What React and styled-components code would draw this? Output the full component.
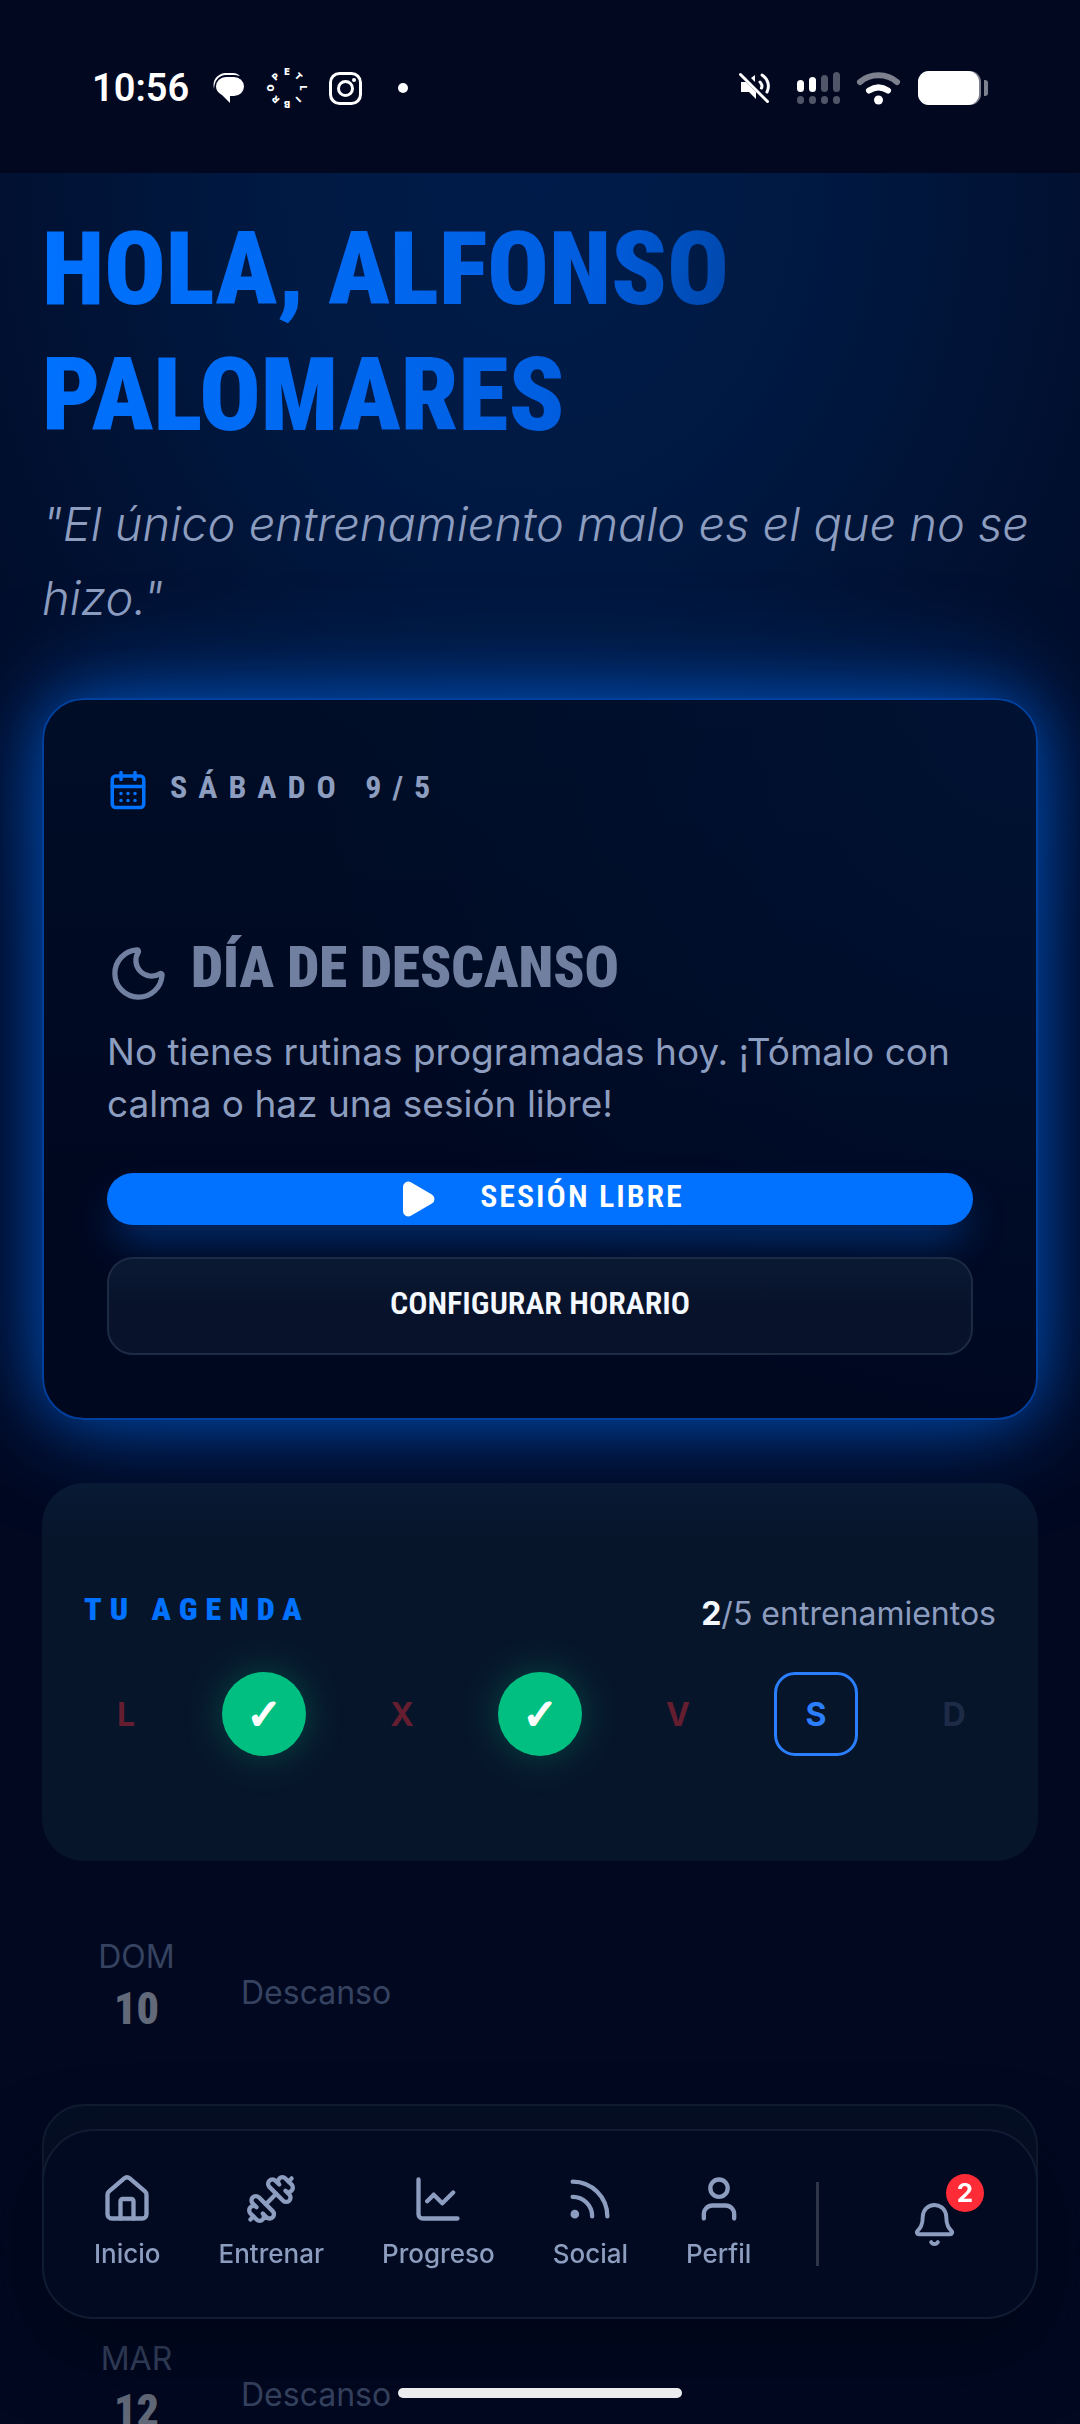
import * as React from 'react'
import styled, { createGlobalStyle, css } from 'styled-components'
import {
    Bell,
    CalendarDays,
    ChartLine,
    Dumbbell,
    House,
    Moon,
    Play,
    Rss,
    User
} from 'lucide-react'

const colors = {
    night: '#010820',
    blue: '#0072ff',
    day: '#2b7fff',
    green: '#00bf80',
    red: '#ff2b36',
    muted: '#8d9dbf',
    white: '#f4f8ff',
    line: '#101c33'
}

const heading = css`
    font-family: 'Roboto Condensed', 'Open Sans Condensed', Roboto, sans-serif;
    text-transform: uppercase;
`

const GlobalStyle = createGlobalStyle`
    * {
        box-sizing: border-box;
    }

    body {
        margin: 0;
        background: ${colors.night};
        color: ${colors.muted};
        font-family: Inter, Roboto, sans-serif;
    }

    h1, h2, h3, p, ul {
        margin: 0;
        padding: 0;
    }

    button {
        font: inherit;
        color: inherit;
        cursor: pointer;
    }
`

/* ---------- status bar ---------- */

const StatusBar = styled.header`
    display: flex;
    align-items: center;
    justify-content: space-between;
    flex: none;
    height: 173px;
    padding: 3px 92px 0;
    background: ${colors.night};
    color: white;

    svg {
        display: block;
        flex: none;
        overflow: visible;
    }
`

const StatusGroup = styled.div`
    display: flex;
    align-items: center;
    gap: ${p => p.$gap}px;
`

const Clock = styled.time`
    font-family: Roboto, sans-serif;
    font-size: 38px;
    line-height: 42px;
    font-weight: 600;
    padding-right: 2px;
`

const ChatIcon = () => (
    <svg width="32" height="32" viewBox="0 0 32 32" fill="white">
        <path d="M1 17C-1 8 4 2 12 1h8c3 0 5 1 7 3C25 3.500 22 3 20 3h-8C5 4 1.500 9 1 17z" />
        <path d="M13 5h8a10 9.500 0 0 1 0 19h-4v7l-8-8C5 21 3 18 3 14.500A10 9.500 0 0 1 13 5z" />
    </svg>
)

const RingIcon = () => (
    <svg width="40" height="40" viewBox="-20 -20 40 40" fill="white">
        {'ETLIBROP'.split('').map((letter, i) => (
            <text
                key={letter}
                y="-13"
                fontSize="9"
                fontWeight="900"
                fontFamily="Inter, sans-serif"
                textAnchor="middle"
                transform={`rotate(${i * 45})`}
            >
                {letter}
            </text>
        ))}
    </svg>
)

const CameraIcon = () => (
    <svg width="33" height="33" viewBox="0 0 33 33" fill="none" stroke="white">
        <rect x="1.500" y="1.500" width="30" height="30" rx="9" strokeWidth="3" />
        <circle cx="16.500" cy="16.500" r="7" strokeWidth="3" />
        <circle cx="25" cy="8" r="2" fill="white" stroke="none" />
    </svg>
)

const MuteIcon = () => (
    <svg width="40" height="32" viewBox="0 0 40 32" fill="white">
        <path d="M2 10h5l10 10v7l-7-7H2z" />
        <path d="M12 6l4-3v7z" />
        <g fill="none" stroke="white" strokeLinecap="round">
            <path d="M1.500 2.500l27 27" strokeWidth="3" />
            <path d="M21 10q3 3 1.500 6" strokeWidth="3" />
            <path d="M23 3c6 4 8 11 5 17" strokeWidth="3" />
        </g>
    </svg>
)

const SignalIcon = () => (
    <svg width="42" height="32" viewBox="0 0 42 32">
        {[8, 5, 3, 0].map((top, i) => (
            <g key={top} fill={i < 2 ? 'white' : '#505667'}>
                <rect x={i * 12} y={top} width="7" height={20 - top} rx="3.500" />
                <rect
                    x={i * 12}
                    y="24"
                    width="7"
                    height="8"
                    rx="3.500"
                    fill="#505667"
                />
            </g>
        ))}
    </svg>
)

const WifiIcon = () => (
    <svg width="43" height="33" viewBox="0 0 43 33" fill="none">
        <g strokeWidth="6" strokeLinecap="round">
            <path d="M3 10c10-9 27-9 37 0" stroke="#7d818e" />
            <path d="M12 18.500c6-4 13-4 19 0" stroke="white" />
        </g>
        <circle cx="21.500" cy="28" r="4.500" fill="white" />
    </svg>
)

const BatteryIcon = () => (
    <svg width="70" height="34" viewBox="0 0 70 34">
        <rect width="63" height="34" rx="11" fill="#7d818e" />
        <rect width="61" height="34" rx="11" fill="white" />
        <path d="M66 9h1a3 3 0 0 1 3 3v10a3 3 0 0 1-3 3h-1z" fill="#7d818e" />
    </svg>
)

const DotIcon = () => (
    <svg width="24" height="10" viewBox="0 0 24 10">
        <circle cx="19" cy="5" r="5" fill="white" />
    </svg>
)

/* ---------- page ---------- */

const Screen = styled.div`
    display: flex;
    flex-direction: column;
    height: 100vh;
    overflow: hidden;
    background: radial-gradient(
            ellipse 75% 42% at 50% 7%,
            #001b49 0%,
            #001a44 30%,
            #00123400 100%
        ),
        ${colors.night};
`

const Main = styled.main`
    display: flex;
    flex-direction: column;
    flex: 1;
    min-height: 0;
    padding: 33px 42px 0;

    > * {
        flex: none;
    }
`

const Greeting = styled.h1`
    ${heading}
    max-width: 800px;
    font-size: 102px;
    line-height: 126px;
    font-weight: 900;
    color: transparent;
    background: linear-gradient(
        100deg,
        #0072ff 0%,
        #0068f0 40%,
        #005cdc 68%,
        #0046a8 84%,
        #003888 100%
    );
    background-clip: text;
`

const Quote = styled.p`
    margin: 29px 0 63px;
    font-size: 47px;
    line-height: 74px;
    font-weight: 300;
    font-style: italic;
`

const Card = styled.section`
    margin-bottom: ${p => (p.$glow ? 63 : 42)}px;
    border-radius: 42px;
    padding: 105px 42px;
    background: linear-gradient(#081a35, #07152b 14%);

    ${p =>
        p.$glow &&
        css`
            padding: 63px;
            border: 2px solid #00409f;
            background: radial-gradient(
                    circle at 100% 0%,
                    #001233,
                    #00123300 60%
                ),
                linear-gradient(#000d26, #000820 70%);
            box-shadow: 0 0 52px rgba(0, 114, 255, 0.3),
                0 0 105px rgba(0, 114, 255, 0.6);
        `}
`

const DateRow = styled.div`
    display: flex;
    align-items: center;
    gap: 21px;
    height: 53px;
    margin-bottom: 126px;
    color: ${colors.blue};
`

const DateText = styled.p`
    ${heading}
    padding-bottom: 6px;
    font-size: 32px;
    line-height: 42px;
    font-weight: 700;
    letter-spacing: 11px;
    color: ${colors.muted};
`

const RestRow = styled.div`
    display: flex;
    align-items: center;
    gap: 21px;
    height: 63px;
    margin-bottom: 21px;
    color: #7180a0;
`

const RestTitle = styled.h2`
    ${heading}
    padding-bottom: 12px;
    font-size: 57px;
    line-height: 63px;
    font-weight: 900;
`

const Text = styled.p`
    margin-bottom: 43px;
    font-size: 37px;
    line-height: 52px;
`

const Button = styled.button`
    ${heading}
    display: flex;
    align-items: center;
    justify-content: center;
    gap: 42px;
    width: 100%;
    height: ${p => (p.$primary ? 52 : 98)}px;
    margin-top: ${p => (p.$primary ? 0 : 32)}px;
    padding: 0 0 6px;
    border: ${p => (p.$primary ? 0 : '2px solid #1d2a44')};
    border-radius: 26px;
    background: ${p =>
        p.$primary ? colors.blue : 'linear-gradient(#0a1932, #08132b 50%)'};
    box-shadow: ${p =>
        p.$primary ? '0 22px 40px -8px rgba(0, 114, 255, 0.4)' : 'none'};
    color: ${p => (p.$primary ? 'white' : colors.white)};
    font-size: 32px;
    line-height: 42px;
    font-weight: 600;
    letter-spacing: ${p => (p.$primary ? 2 : 0)}px;

    svg {
        position: relative;
        top: 3px;
    }
`

const AgendaHeader = styled.div`
    display: flex;
    align-items: flex-end;
    justify-content: space-between;
    margin-bottom: 42px;
`

const AgendaTitle = styled.h3`
    ${heading}
    font-size: 32px;
    line-height: 42px;
    font-weight: 900;
    letter-spacing: 8px;
    color: ${colors.blue};
`

const Count = styled.p`
    font-size: 32px;
    line-height: 32px;

    strong {
        font-weight: 700;
        color: ${colors.white};
    }
`

const Week = styled.ul`
    display: flex;
    justify-content: space-between;
    list-style: none;
`

const dayStyles = {
    missed: css`
        color: #651e30;
    `,
    done: css`
        border-radius: 50%;
        background: ${colors.green};
        box-shadow: 0 0 39px rgba(0, 191, 128, 0.3);
        color: white;
        font-family: 'DejaVu Sans', sans-serif;
        font-size: 42px;
        -webkit-text-stroke: 2px white;
    `,
    today: css`
        border: 3px solid ${colors.day};
        border-radius: 21px;
        color: ${colors.day};
    `,
    next: css`
        color: #1e2b47;
    `
}

const Day = styled.li`
    display: flex;
    align-items: center;
    justify-content: center;
    width: 84px;
    height: 84px;
    font-size: 32px;
    font-weight: 700;
    ${p => dayStyles[p.$state]}
`

const Plan = styled.section`
    display: flex;
    flex-direction: column;
    gap: 21px;
`

const PlanRow = styled.article`
    display: flex;
    align-items: center;
    gap: 52px;
    flex: none;
    height: 180px;
    padding: 0 40px;
    border: 2px solid ${p => (p.$active ? colors.line : 'transparent')};
    border-radius: 42px;
    background: ${p => (p.$active ? '#050f25' : 'transparent')};
    color: #364360;
    font-size: 32px;
    line-height: 42px;
`

const PlanDate = styled.div`
    width: 105px;
    padding-bottom: 10px;
    text-align: center;

    strong {
        ${heading}
        display: block;
        font-size: 44px;
        line-height: 63px;
        font-weight: 900;
        color: #626979;
    }
`

/* ---------- bottom navigation ---------- */

const Nav = styled.nav`
    position: fixed;
    left: 42px;
    right: 42px;
    bottom: 105px;
    display: flex;
    align-items: center;
    justify-content: space-between;
    height: 190px;
    padding: 0 52px 0 50px;
    border: 2px solid ${colors.line};
    border-radius: 52px;
    background: #010a20;
    box-shadow: 0 26px 78px rgba(0, 4, 14, 0.5);
`

const NavLinks = styled.div`
    display: flex;
    gap: 58px;
`

const NavLink = styled.a`
    display: flex;
    flex-direction: column;
    align-items: center;
    gap: 8px;
    color: ${colors.muted};
    font-size: 26px;
    line-height: 42px;
    font-weight: 500;
    text-decoration: none;
`

const Divider = styled.span`
    width: 3px;
    height: 84px;
    background: #2f3648;
`

const BellButton = styled.button`
    position: relative;
    display: flex;
    align-items: center;
    justify-content: center;
    width: 100px;
    height: 100px;
    padding: 0;
    border: 0;
    background: none;
`

const Badge = styled.span`
    position: absolute;
    top: 0;
    right: 0;
    width: 38px;
    height: 38px;
    border-radius: 50%;
    background: ${colors.red};
    color: white;
    font-size: 26px;
    line-height: 38px;
    font-weight: 700;
    text-align: center;
`

const HomeBar = styled.div`
    position: fixed;
    left: 50%;
    bottom: 26px;
    width: 284px;
    height: 10px;
    margin-left: -142px;
    border-radius: 5px;
    background: #ebecef;
`

const week = [
    { name: 'L', state: 'missed' },
    { name: 'M', state: 'done' },
    { name: 'X', state: 'missed' },
    { name: 'J', state: 'done' },
    { name: 'V', state: 'missed' },
    { name: 'S', state: 'today' },
    { name: 'D', state: 'next' }
]

const plan = [
    { day: 'DOM', date: 10, title: 'Descanso' },
    { active: true },
    { day: 'MAR', date: 12, title: 'Descanso' }
]

const links = [
    { label: 'Inicio', Icon: House },
    { label: 'Entrenar', Icon: Dumbbell },
    { label: 'Progreso', Icon: ChartLine },
    { label: 'Social', Icon: Rss },
    { label: 'Perfil', Icon: User }
]

const App = () => (
    <Screen>
        <GlobalStyle />
        <StatusBar>
            <StatusGroup $gap={22}>
                <Clock>10:56</Clock>
                <ChatIcon />
                <RingIcon />
                <CameraIcon />
                <DotIcon />
            </StatusGroup>
            <StatusGroup $gap={18}>
                <MuteIcon />
                <SignalIcon />
                <WifiIcon />
                <BatteryIcon />
            </StatusGroup>
        </StatusBar>
        <Main>
            <Greeting>
                Hola, Alfonso
                <br />
                Palomares
            </Greeting>
            <Quote>
                "El único entrenamiento malo es el que no se hizo."
            </Quote>
            <Card $glow>
                <DateRow>
                    <CalendarDays size={42} />
                    <DateText>Sábado 9/5</DateText>
                </DateRow>
                <RestRow>
                    <Moon size={63} />
                    <RestTitle>Día de descanso</RestTitle>
                </RestRow>
                <Text>
                    No tienes rutinas programadas hoy. ¡Tómalo con calma o haz
                    una sesión libre!
                </Text>
                <Button $primary>
                    <Play size={42} fill="currentColor" />
                    Sesión libre
                </Button>
                <Button>Configurar horario</Button>
            </Card>
            <Card>
                <AgendaHeader>
                    <AgendaTitle>Tu agenda</AgendaTitle>
                    <Count>
                        <strong>2</strong>/5 entrenamientos
                    </Count>
                </AgendaHeader>
                <Week>
                    {week.map(({ name, state }) => (
                        <Day key={name} $state={state}>
                            {state === 'done' ? '✓' : name}
                        </Day>
                    ))}
                </Week>
            </Card>
            <Plan>
                {plan.map(({ day, date, title, active }, i) => (
                    <PlanRow key={i} $active={active}>
                        {day && (
                            <PlanDate>
                                {day}
                                <strong>{date}</strong>
                            </PlanDate>
                        )}
                        {title && <p>{title}</p>}
                    </PlanRow>
                ))}
            </Plan>
        </Main>
        <Nav>
            <NavLinks>
                {links.map(({ label, Icon }) => (
                    <NavLink key={label} href="#">
                        <Icon size={52} />
                        {label}
                    </NavLink>
                ))}
            </NavLinks>
            <Divider />
            <BellButton aria-label="Notificaciones">
                <Bell size={47} />
                <Badge>2</Badge>
            </BellButton>
        </Nav>
        <HomeBar />
    </Screen>
)

export default App
